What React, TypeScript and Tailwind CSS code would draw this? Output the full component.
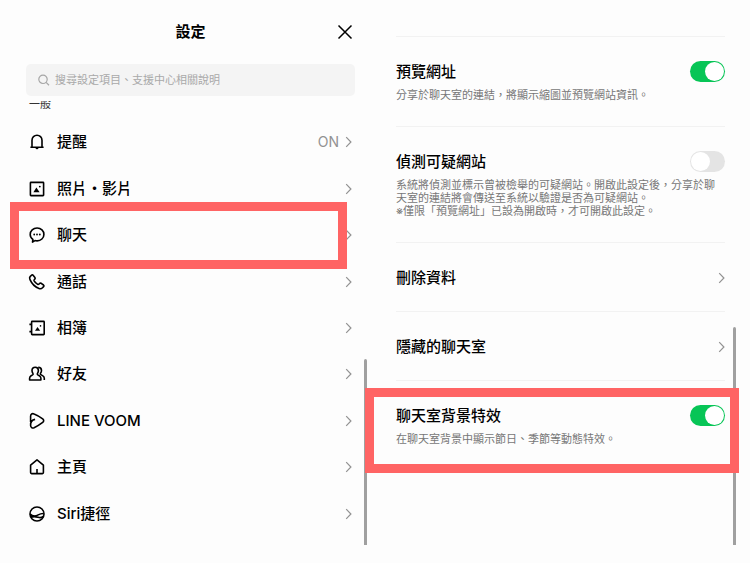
import { useState } from 'react';
import type { ReactNode } from 'react';

type MenuItem = {
  label: string;
  icon: ReactNode;
  value?: string;
  highlighted?: boolean;
};

const menuItems: MenuItem[] = [
  {
    label: '提醒',
    value: 'ON',
    icon: (
      <>
        <path d="M2.4 14.200h13.200M4 14V7.200a5 5 0 0 1 10 0V14" />
        <path d="M7.500 14.800h3a1.500 1.500 0 0 1-3 0z" fill="currentColor" stroke="none" />
      </>
    ),
  },
  {
    label: '照片・影片',
    icon: (
      <>
        <rect x="2.400" y="2.400" width="13.200" height="13.200" rx="0.6" />
        <path d="M5.400 12.200 8.400 7.600l3.200 4.600z" fill="currentColor" stroke="none" />
        <circle cx="11.800" cy="6.600" r="0.9" fill="currentColor" stroke="none" />
      </>
    ),
  },
  {
    label: '聊天',
    highlighted: true,
    icon: (
      <>
        <path d="M4.900 13.300C3.200 12.200 2.200 10.500 2.200 8.500c0-3.700 3-6.500 6.900-6.500s6.800 2.800 6.800 6.400-3 6.500-6.800 6.500c-.8 0-1.500-.1-2.100-.3l-2.500 1.500z" />
        <circle cx="6.200" cy="8.500" r="0.9" fill="currentColor" stroke="none" />
        <circle cx="9" cy="8.500" r="0.9" fill="currentColor" stroke="none" />
        <circle cx="11.800" cy="8.500" r="0.9" fill="currentColor" stroke="none" />
      </>
    ),
  },
  {
    label: '通話',
    icon: (
      <path d="M2.100 3.600 3.500 2.200c.5-.5 1.200-.4 1.600.1l1.800 2.300c.4.500.3 1.100-.1 1.500l-.6.600c-.3.300-.3.700-.1 1.100.9 1.500 2.100 2.700 3.600 3.600.4.200.8.200 1.100-.1l.9-.9c.4-.4 1-.4 1.500-.1l2.300 1.700c.5.400.6 1.100.1 1.600l-1.100 1.200c-.9.900-2.200 1.200-3.500.7C6.900 13.900 3.900 10.900 2 6.600c-.5-1.100-.6-2.200.1-3z" />
    ),
  },
  {
    label: '相簿',
    icon: (
      <>
        <rect x="3.600" y="2.400" width="12.600" height="13.200" rx="0.6" />
        <path d="M1.400 5.400h2.400M1.400 12.600h2.400" />
        <path d="m7 11.800 2.500-3.900 2.700 3.900z" fill="currentColor" stroke="none" />
        <circle cx="12.500" cy="6.900" r="0.800" fill="currentColor" stroke="none" />
      </>
    ),
  },
  {
    label: '好友',
    icon: (
      <>
        <path d="M7.200 2.200c2 0 3.200 1.400 3.200 3.300 0 1.200-.3 2-.9 2.900-.3.500-.2 1.200.3 1.500l1.500.8c1.100.6 1.600 1.400 1.600 2.600v1.700H1.600v-1.700c0-1.200.5-2 1.500-2.600l1.500-.8c.5-.3.600-1 .3-1.500-.6-.9-.9-1.700-.9-2.900 0-1.900 1.200-3.300 3.200-3.300z" />
        <path d="M10.200 2.300c2 .1 3.300 1.400 3.300 3.200 0 1.200-.4 2.100-1 2.800-.3.500-.2 1 .3 1.300l1.400.8c1.500.800 2.100 1.700 2.100 2.900v1.800" />
      </>
    ),
  },
  {
    label: 'LINE VOOM',
    icon: (
      <path d="M2.600 10V4.200c0-2.100 1.600-3.100 3.500-2.200 3 1.200 6 2.900 8.600 4.900 1.300 1 1.300 2.500 0 3.500-2.600 2-5.600 3.900-8.600 5.300-1.900.8-3.400-.3-3.500-2.200-.2-3.500 1-5.500 4.500-6.100" />
    ),
  },
  {
    label: '主頁',
    icon: (
      <>
        <path d="M2.600 7.200 9 1.900l6.400 5.300v7.400c0 .6-.4 1-1 1H3.600c-.6 0-1-.4-1-1z" />
        <path d="M9 11v4.400" />
      </>
    ),
  },
  {
    label: 'Siri捷徑',
    icon: (
      <>
        <circle cx="9" cy="9" r="7" />
        <path d="M2.200 9c2.400 2.600 5.600 2.200 8 .9 2-1.100 3.700-1.600 5.600-1.400" />
        <path d="M3 12.200c3.200-1.300 5.300-.5 7.200.1 2 .6 3.600.3 5-.8" />
        <path d="M2.200 9c1.800 1.900 4 2.200 6 1.800-1.800.1-3.500.500-5.200 1.400z" fill="currentColor" stroke="none" />
      </>
    ),
  },
];

type Setting = {
  id: string;
  title: string;
  lines?: string[];
  toggle?: boolean;
  highlighted?: boolean;
};

const settings: Setting[] = [
  {
    id: 'preview',
    title: '預覽網址',
    lines: ['分享於聊天室的連結，將顯示縮圖並預覽網站資訊。'],
    toggle: true,
  },
  {
    id: 'detect',
    title: '偵測可疑網站',
    lines: [
      '系統將偵測並標示曾被檢舉的可疑網站。開啟此設定後，分享於聊天室的連結將會傳送至系統以驗證是否為可疑網站。',
      '※僅限「預覽網址」已設為開啟時，才可開啟此設定。',
    ],
    toggle: false,
  },
  { id: 'delete', title: '刪除資料' },
  { id: 'hidden', title: '隱藏的聊天室' },
  {
    id: 'effects',
    title: '聊天室背景特效',
    lines: ['在聊天室背景中顯示節日、季節等動態特效。'],
    toggle: true,
    highlighted: true,
  },
];

function Chevron() {
  return (
    <svg viewBox="0 0 7 12" className="h-3 w-[7px] shrink-0 text-[#929292]" fill="none" stroke="currentColor" strokeWidth="1.2" aria-hidden="true">
      <path d="m1.200 1.200 4.700 4.800-4.700 4.800" />
    </svg>
  );
}

function Toggle({ id, defaultChecked }: { id: string; defaultChecked: boolean }) {
  const [checked, setChecked] = useState(defaultChecked);

  return (
    <span className="relative flex shrink-0">
      <input
        id={id}
        type="checkbox"
        role="switch"
        checked={checked}
        onChange={() => setChecked(!checked)}
        className="peer h-[21px] w-[35px] cursor-pointer appearance-none rounded-full bg-[#e4e4e4] checked:bg-[#07c556]"
      />
      <span className="pointer-events-none absolute top-px left-px size-[19px] rounded-full bg-white peer-checked:left-[15px]" />
    </span>
  );
}

function SettingsMenu() {
  return (
    <section className="relative flex flex-col pt-4 pr-5 pb-[26px] pl-[26px]">
      <header className="grid h-8 grid-cols-[1fr_auto_1fr] items-center">
        <h1 className="col-start-2 text-[15px] leading-5 font-bold">設定</h1>
        <button type="button" aria-label="關閉" className="justify-self-end">
          <svg viewBox="0 0 20 20" className="size-5" fill="none" stroke="currentColor" strokeWidth="1.5" aria-hidden="true">
            <path d="m3.500 3.500 13 13M16.500 3.500l-13 13" />
          </svg>
        </button>
      </header>

      <label className="mt-4 flex h-8 items-center gap-[5px] rounded-[5px] bg-[#f4f4f4] pl-3">
        <svg viewBox="0 0 12 12" className="size-3 shrink-0 text-[#a6a6a6]" fill="none" stroke="currentColor" strokeWidth="1.200" aria-hidden="true">
          <circle cx="5" cy="5.300" r="4.200" />
          <path d="m8.100 8.400 2.900 2.800" />
        </svg>
        <input
          type="search"
          aria-label="搜尋"
          placeholder="搜尋設定項目、支援中心相關說明"
          className="min-w-0 flex-1 bg-transparent text-[11px] outline-none placeholder:text-[#a9a9a9]"
        />
      </label>

      {/* section heading, half scrolled under the search bar */}
      <div className="mt-[5px] flex h-2 items-end overflow-hidden pl-[3px]">
        <h2 className="text-[11px] leading-[10px] text-[#333]">一般</h2>
      </div>

      <ul className="mt-2.5 flex flex-1 flex-col">
        {menuItems.map((item) => (
          <li key={item.label} className="relative flex min-h-10 flex-1">
            <button type="button" className="flex flex-1 items-center pr-[3px] pl-0.5 text-left">
              <svg viewBox="0 0 18 18" className="size-[18px] shrink-0" fill="none" stroke="currentColor" strokeWidth="1.600" strokeLinejoin="round" aria-hidden="true">
                {item.icon}
              </svg>
              <span className="ml-[11px] flex-1 text-[15px] leading-5 font-medium">{item.label}</span>
              {item.value && <span className="mr-1.5 text-sm text-[#929292]">{item.value}</span>}
              <Chevron />
            </button>
            {item.highlighted && (
              <div className="pointer-events-none absolute -top-2.5 right-2 -bottom-[11px] -left-4 border-[9px] border-[#ff6464]" />
            )}
          </li>
        ))}
      </ul>

      <div className="absolute right-2 bottom-[18px] h-[186px] w-[3px] rounded-t-full bg-[#a0a0a0]" />
    </section>
  );
}

function ChatSettings() {
  return (
    <section className="relative pt-9 pr-[25px] pl-[21px]">
      <div className="absolute right-3.5 bottom-[18px] h-[218px] w-[3px] rounded-t-full bg-[#a0a0a0]" />
      <ul className="border-t border-[#f2f2f2]">
        {settings.map((item) => (
          <li key={item.id} className="relative border-b border-[#f2f2f2] last:border-b-0">
            {item.toggle === undefined ? (
              <button type="button" className="flex w-full items-center justify-between pt-6 pb-[23px] text-left">
                <span className="text-[15px] leading-[21px] font-medium">{item.title}</span>
                <Chevron />
              </button>
            ) : (
              <div className="py-6">
                <div className="flex items-center justify-between">
                  <label htmlFor={item.id} className="text-[15px] leading-[21px] font-medium">
                    {item.title}
                  </label>
                  <Toggle id={item.id} defaultChecked={item.toggle} />
                </div>
                <div className="mt-[7px] text-[11px] leading-[13px] text-[#777]">
                  {item.lines?.map((line) => (
                    <p key={line}>{line}</p>
                  ))}
                </div>
              </div>
            )}
            {item.highlighted && (
              <div className="pointer-events-none absolute top-[7px] -right-3.5 -bottom-[3px] -left-[31px] border-[9px] border-[#ff6464]" />
            )}
          </li>
        ))}
      </ul>
    </section>
  );
}

export default function App() {
  return (
    <main
      lang="zh-Hant"
      className="grid min-h-screen grid-cols-2 bg-[#fdfdfd] font-[Inter,'Noto_Sans_CJK_TC',sans-serif] text-black"
    >
      <SettingsMenu />
      <ChatSettings />
    </main>
  );
}
